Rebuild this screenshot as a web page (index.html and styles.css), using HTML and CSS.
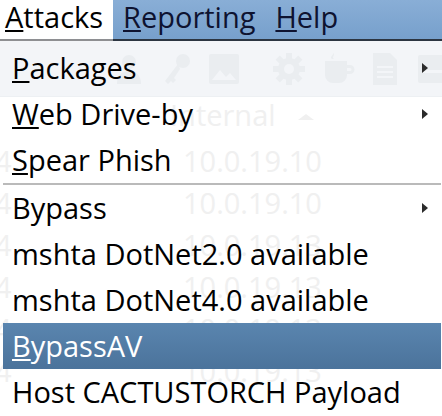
FILE: index.html
```html
<!DOCTYPE html>
<html>
<head>
<meta charset="utf-8">
<link rel="stylesheet" href="styles.css">
</head>
<body>
<div class="app">
  <nav class="menubar">
    <span class="mb-item active"><u>A</u>ttacks</span>
    <span class="mb-item"><u>R</u>eporting</span>
    <span class="mb-item"><u>H</u>elp</span>
  </nav>
  <div class="workspace">
    <div class="toolbar">
      <svg class="tb-icon i-person" width="26" height="32" viewBox="0 0 26 32"><circle cx="13" cy="9" r="7"/><path d="M1 31c0-9 5-13 12-13s12 4 12 13z"/></svg>
      <svg class="tb-icon i-key" width="28" height="32" viewBox="0 0 28 32"><circle cx="20" cy="8" r="7"/><path d="M15 11 2 28l3 3 3-3 2 2 3-3-2-2 6-9z"/></svg>
      <svg class="tb-icon i-image" width="32" height="32" viewBox="0 0 32 32"><rect x="1" y="1" width="30" height="30" rx="2"/><path d="M4 27l8-10 6 7 4-4 6 7z" class="inner"/></svg>
      <svg class="tb-icon i-gear" width="32" height="32" viewBox="0 0 32 32"><circle cx="16" cy="16" r="11"/><rect x="13" y="0" width="6" height="32"/><rect x="0" y="13" width="32" height="6"/><rect x="13" y="0" width="6" height="32" transform="rotate(45 16 16)"/><rect x="13" y="0" width="6" height="32" transform="rotate(-45 16 16)"/><circle cx="16" cy="16" r="5" class="inner"/></svg>
      <svg class="tb-icon i-cup" width="32" height="32" viewBox="0 0 32 32"><path d="M2 8h22v14a8 8 0 0 1-8 8h-6a8 8 0 0 1-8-8z"/><path d="M24 12h3a4 4 0 0 1 0 9h-3v-3h3a1 1 0 0 0 0-3h-3z"/><path d="M10 0c3 2-2 4 1 6h-2c-3-2 2-4 1-6z"/></svg>
      <svg class="tb-icon i-doc" width="26" height="34" viewBox="0 0 26 34"><path d="M1 1h17l7 7v25H1z"/><path d="M5 14h16v2H5zm0 5h16v2H5zm0 5h16v2H5z" class="inner"/></svg>
      <svg class="tb-icon i-box" width="32" height="32" viewBox="0 0 32 32"><rect x="1" y="2" width="34" height="28" rx="2"/><rect x="5" y="17" width="24" height="3" class="inner"/></svg>
    </div>
    <div class="table">
      <div class="thead">
        <span class="th-name">Internal</span>
        <span class="th-sort"></span>
      </div>
      <div class="row"><span class="pid">4</span><span class="ip">10.0.19.10</span></div>
      <div class="row"><span class="pid">4</span><span class="ip">10.0.19.10</span></div>
      <div class="row"><span class="pid">4</span><span class="ip">10.0.19.13</span></div>
      <div class="row"><span class="pid">4</span><span class="ip">10.0.19.13</span></div>
      <div class="row"><span class="pid">4</span><span class="ip">10.0.19.13</span></div>
      <div class="row"><span class="pid">4</span><span class="ip">10.0.19.13</span></div>
    </div>
    <div class="menu">
      <div class="item"><span><u>P</u>ackages</span><svg class="arrow" width="6" height="10" viewBox="0 0 6 10"><path d="M0 0l6 5-6 5z"/></svg></div>
      <div class="item"><span><u>W</u>eb Drive-by</span><svg class="arrow" width="6" height="10" viewBox="0 0 6 10"><path d="M0 0l6 5-6 5z"/></svg></div>
      <div class="item"><span><u>S</u>pear Phish</span></div>
      <div class="sep"></div>
      <div class="item"><span>Bypass</span><svg class="arrow" width="6" height="10" viewBox="0 0 6 10"><path d="M0 0l6 5-6 5z"/></svg></div>
      <div class="item"><span>mshta DotNet2.0 available</span></div>
      <div class="item"><span>mshta DotNet4.0 available</span></div>
      <div class="item selected"><span><u>B</u>ypassAV</span></div>
      <div class="item"><span>Host CACTUSTORCH Payload</span></div>
    </div>
  </div>
</div>
</body>
</html>
```

FILE: styles.css
```css
html, body {
  margin: 0;
  padding: 0;
  background: #ffffff;
  overflow: hidden;
}

.app {
  width: 442px;
  height: 416px;
  overflow: hidden;
  font-family: "Open Sans", "DejaVu Sans", sans-serif;
  font-size: 29px;
}

u {
  text-decoration-thickness: 2px;
  text-underline-offset: 2px;
}

/* ---------- menu bar ---------- */
.menubar {
  display: flex;
  height: 39px;
  background: linear-gradient(#89aed6, #77a0cc);
  border-bottom: 2px solid #2c3541;
  color: #0e1330;
}

.mb-item {
  padding: 0 10px 6px 10px;
  line-height: 33px;
  white-space: nowrap;
}

.mb-item.active {
  position: relative;
  padding-left: 5px;
  background: #ffffff;
  color: #000000;
  width: 98px;
}

.mb-item.active::after {
  content: "";
  position: absolute;
  left: 0;
  right: 0;
  bottom: -2px;
  height: 2px;
  background: #8e8f92;
}

/* ---------- background workspace (seen through the popup) ---------- */
.workspace {
  position: relative;
  height: 375px;
}

.toolbar {
  display: flex;
  align-items: center;
  height: 55px;
  background: #f3f5f8;
  border-bottom: 1px solid #edf0f3;
  padding-left: 116px;
}

.tb-icon {
  fill: #eaedf0;
  flex: none;
}

.tb-icon .inner {
  fill: #f3f5f8;
}

.i-key   { margin-left: 21px; }
.i-image { margin-left: 17px; }
.i-gear  { margin-left: 33px; }
.i-cup   { margin-left: 18px; }
.i-doc   { margin-left: 17px; }
.i-box   { margin-left: 19px; }

.table {
  color: #f0f0f0;
}

.thead {
  display: flex;
  align-items: flex-start;
  height: 36px;
  padding-bottom: 7px;
  line-height: 36px;
  padding-left: 170px;
}

.th-name {
  width: 128px;
}

.th-sort {
  margin-top: 17px;
  width: 0;
  height: 0;
  border-left: 8px solid transparent;
  border-right: 8px solid transparent;
  border-bottom: 6px solid #f0f0f0;
}

.row {
  display: flex;
  height: 42px;
  line-height: 42px;
}

.pid {
  width: 183px;
  overflow: hidden;
  text-indent: -5px;
}

.ip {
  white-space: nowrap;
}

/* ---------- popup menu ---------- */
.menu {
  position: absolute;
  top: 0;
  left: 0;
  right: 0;
  bottom: 0;
  padding: 4px 1px 0 3px;
  color: #000000;
}

.item {
  display: flex;
  align-items: center;
  height: 46px;
  line-height: 46px;
  padding-left: 9px;
  white-space: nowrap;
}

.item.selected {
  background: linear-gradient(#5a85af, #4b739b);
  color: #ffffff;
}

.arrow {
  margin-left: auto;
  margin-right: 13px;
  fill: #2b2b2b;
}

.sep {
  height: 2px;
  background: #bababa;
}
```
